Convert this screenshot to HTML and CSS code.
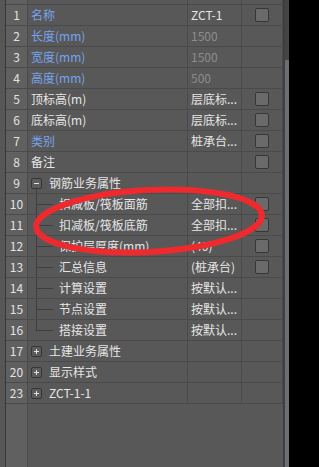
FILE: index.html
```html
<!DOCTYPE html>
<html lang="zh-CN">
<head>
    <meta charset="UTF-8">
    <title>属性编辑</title>
    <link rel="stylesheet" href="styles.css">
</head>
<body>

<div class="panel">
    <div class="strip"></div>
    <div class="sheet">
        <div class="row head">
            <div class="num"></div><div class="name"></div><div class="val"></div><div class="chk"></div>
        </div>
        <div class="row">
            <div class="num">1</div><div class="name blue">名称</div><div class="val">ZCT-1</div><div class="chk"><span class="box"></span></div>
        </div>
        <div class="row">
            <div class="num">2</div><div class="name blue">长度(mm)</div><div class="val dim">1500</div><div class="chk"></div>
        </div>
        <div class="row">
            <div class="num">3</div><div class="name blue">宽度(mm)</div><div class="val dim">1500</div><div class="chk"></div>
        </div>
        <div class="row">
            <div class="num">4</div><div class="name blue">高度(mm)</div><div class="val dim">500</div><div class="chk"></div>
        </div>
        <div class="row">
            <div class="num">5</div><div class="name">顶标高(m)</div><div class="val">层底标...</div><div class="chk"><span class="box"></span></div>
        </div>
        <div class="row">
            <div class="num">6</div><div class="name">底标高(m)</div><div class="val">层底标...</div><div class="chk"><span class="box"></span></div>
        </div>
        <div class="row">
            <div class="num">7</div><div class="name blue">类别</div><div class="val">桩承台...</div><div class="chk"><span class="box"></span></div>
        </div>
        <div class="row">
            <div class="num">8</div><div class="name">备注</div><div class="val"></div><div class="chk"><span class="box"></span></div>
        </div>
        <div class="row">
            <div class="num">9</div><div class="name group open"><span class="toggle minus"></span>钢筋业务属性</div><div class="val"></div><div class="chk"></div>
        </div>
        <div class="row">
            <div class="num">10</div><div class="name child">扣减板/筏板面筋</div><div class="val">全部扣...</div><div class="chk"><span class="box"></span></div>
        </div>
        <div class="row">
            <div class="num">11</div><div class="name child">扣减板/筏板底筋</div><div class="val">全部扣...</div><div class="chk"><span class="box"></span></div>
        </div>
        <div class="row">
            <div class="num">12</div><div class="name child">保护层厚度(mm)</div><div class="val">(40)</div><div class="chk"><span class="box"></span></div>
        </div>
        <div class="row">
            <div class="num">13</div><div class="name child">汇总信息</div><div class="val">(桩承台)</div><div class="chk"><span class="box"></span></div>
        </div>
        <div class="row">
            <div class="num">14</div><div class="name child">计算设置</div><div class="val">按默认...</div><div class="chk"></div>
        </div>
        <div class="row">
            <div class="num">15</div><div class="name child">节点设置</div><div class="val">按默认...</div><div class="chk"></div>
        </div>
        <div class="row">
            <div class="num">16</div><div class="name child last">搭接设置</div><div class="val">按默认...</div><div class="chk"></div>
        </div>
        <div class="row">
            <div class="num">17</div><div class="name group"><span class="toggle plus"></span>土建业务属性</div><div class="val"></div><div class="chk"></div>
        </div>
        <div class="row">
            <div class="num">20</div><div class="name group"><span class="toggle plus"></span>显示样式</div><div class="val"></div><div class="chk"></div>
        </div>
        <div class="row">
            <div class="num">23</div><div class="name group"><span class="toggle plus"></span>ZCT-1-1</div><div class="val"></div><div class="chk"></div>
        </div>
        <div class="filler"><div class="num"></div></div>
    </div>
    <div class="scroll"></div>
</div>

<svg class="mark" width="319" height="467" viewBox="0 0 319 467">
    <ellipse cx="149" cy="221" rx="113" ry="31" transform="rotate(-3 149 221)" fill="none" stroke="#ee2a2e" stroke-width="6"/>
</svg>

</body>
</html>
```

FILE: styles.css
```css
body {
    margin: 0;
    background-color: #000;
    font-family: "Noto Sans CJK SC", "Noto Sans", sans-serif;
    font-size: 12px;
    color: #e6e6e6;
}

.panel {
    position: relative;
    display: flex;
    width: 289px;
    height: 467px;
    background-color: #585858;
}

.strip {
    width: 5px;
    border-right: 1px solid #383838;
    background-color: #575757;
}

.sheet {
    display: flex;
    flex-direction: column;
    width: 277px;
    border-right: 2px solid #3f3f3f;
}

.row {
    display: flex;
    height: 20px;
    line-height: 20px;
    border-bottom: 1px solid #4a4a4a;
}

.row.head {
    height: 4px;
}

.num, .name, .val, .chk {
    border-right: 1px solid #4a4a4a;
    white-space: nowrap;
    overflow: hidden;
}

.num {
    width: 21px;
    text-align: center;
    background-color: #606060;
    color: #e2e2e2;
}

.name {
    position: relative;
    width: 156px;
    padding-left: 3px;
}

.val {
    width: 50px;
    padding-left: 3px;
}

.chk {
    width: 40px;
    display: flex;
    align-items: center;
    justify-content: center;
}

.blue {
    color: #76a3ec;
}

.dim {
    color: #8c8c8c;
}

.box {
    width: 12px;
    height: 12px;
    border: 1px solid #363636;
    border-radius: 2px;
    background-color: #6a6a6a;
}

.group {
    display: flex;
    align-items: center;
}

.toggle {
    position: relative;
    width: 9px;
    height: 9px;
    margin-right: 7px;
    border: 1px solid #363636;
    border-radius: 2px;
    background-color: #5c5c5c;
}

.toggle::before,
.toggle::after {
    content: "";
    position: absolute;
    background-color: #e4e4e4;
}

.toggle::before {
    left: 2px;
    top: 4px;
    width: 5px;
    height: 1px;
}

.toggle.plus::after {
    left: 4px;
    top: 2px;
    width: 1px;
    height: 5px;
}

.group.open::after {
    content: "";
    position: absolute;
    left: 8px;
    top: 15px;
    bottom: -1px;
    width: 1px;
    background-color: #3e3e3e;
}

.child {
    padding-left: 31px;
    width: 128px;
}

.child::before {
    content: "";
    position: absolute;
    left: 8px;
    top: 0;
    bottom: -1px;
    width: 1px;
    background-color: #3e3e3e;
}

.child.last::before {
    bottom: 10px;
}

.child::after {
    content: "";
    position: absolute;
    left: 8px;
    top: 10px;
    width: 17px;
    height: 1px;
    background-color: #3e3e3e;
}

.filler {
    flex: 1;
    display: flex;
}

.filler .num {
    height: 100%;
}

.scroll {
    width: 4px;
    background: linear-gradient(#454545 0, #454545 60px, #6b6f73 60px, #6b6f73 100%);
}

.mark {
    position: absolute;
    left: 0;
    top: 0;
    pointer-events: none;
}
```
